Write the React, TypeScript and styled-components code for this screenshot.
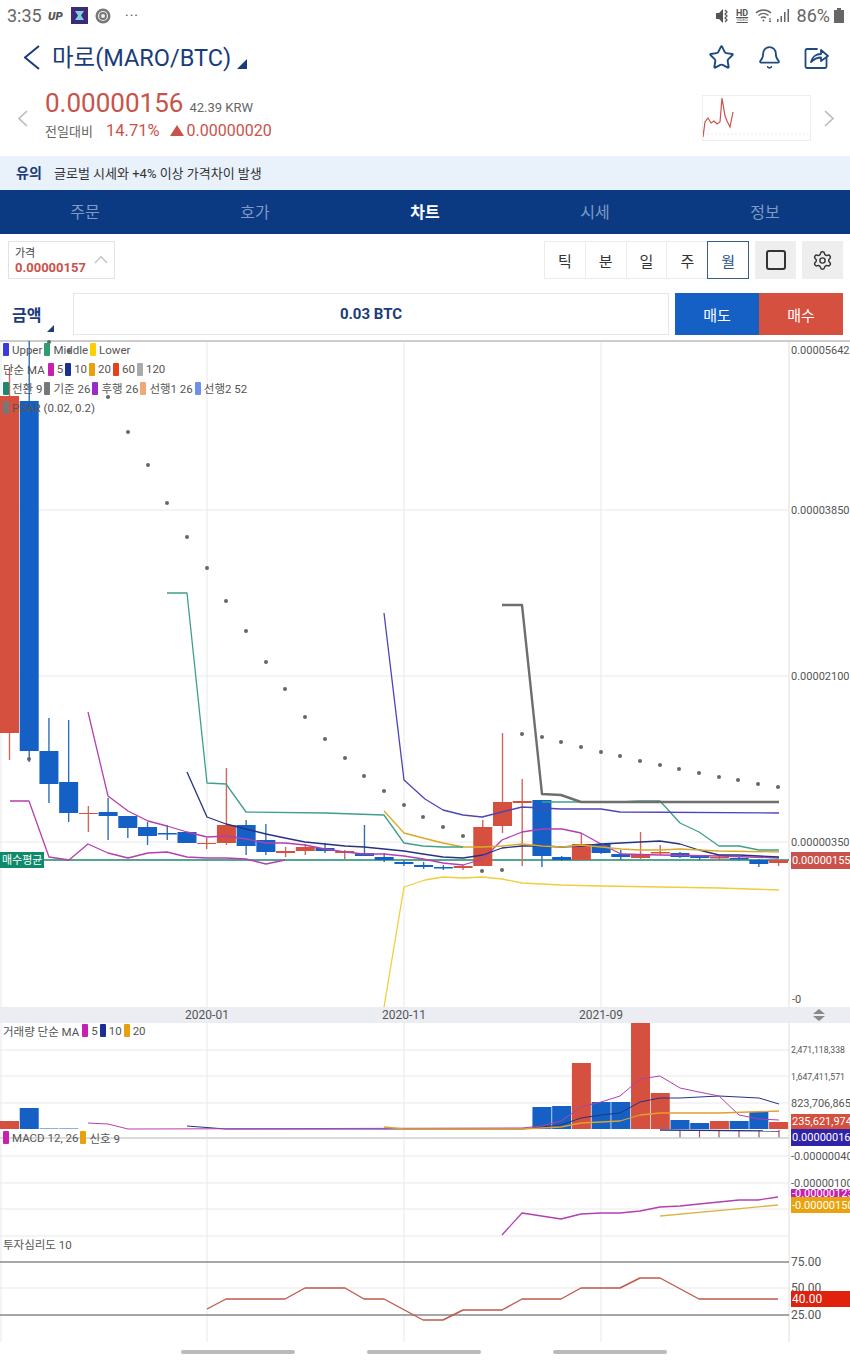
import React from 'react';
import styled, {createGlobalStyle} from 'styled-components';
import {Bell, Settings, Star} from 'lucide-react';

const FONT = `Roboto, "Noto Sans CJK KR", "Liberation Sans", sans-serif`;
const NAVY = '#1a3c7a';
const RED = '#d5503f';
const BLUE = '#1460c4';

const GlobalStyle = createGlobalStyle`
  html, body {
    margin: 0;
    padding: 0;
    background: #fff;
  }
  * {
    box-sizing: border-box;
  }
`;

const Page = styled.div`
  width: 850px;
  height: 1360px;
  overflow: hidden;
  background: #fff;
  font-family: ${FONT};
  color: #333;
`;

/* ---------- status bar ---------- */
const StatusBar = styled.div`
  height: 30px;
  padding: 1px 6px 0 7px;
  display: flex;
  align-items: center;
  justify-content: space-between;
  color: #666;
`;
const StatusGroup = styled.div`
  display: flex;
  align-items: center;
`;
const Time = styled.span`
  font-size: 18px;
  width: 41px;
`;
const UpMark = styled.span`
  font-size: 11.5px;
  font-weight: 900;
  font-style: italic;
  color: #555;
  width: 23px;
`;
const Dots = styled.span`
  margin-left: 14px;
  font-size: 14px;
  letter-spacing: 1px;
  color: #555;
`;
const HdMark = styled.span`
  margin: 0 5px 0 5px;
  width: 15px;
  display: flex;
  flex-direction: column;
  align-items: center;
  font-size: 9px;
  font-weight: 700;
  line-height: 9px;
  color: #555;
  text-decoration: underline;
  &::after {
    content: 'VIDEO';
    font-size: 4px;
    line-height: 4px;
    font-weight: 400;
  }
`;
const Battery = styled.span`
  font-size: 18px;
  margin: 0 4px 0 6px;
`;

/* ---------- title ---------- */
const TitleRow = styled.div`
  height: 55px;
  padding: 0 21px 0 24px;
  display: flex;
  align-items: center;
  color: ${NAVY};
`;
const Title = styled.h1`
  margin: 0 0 0 12px;
  font-size: 23.5px;
  font-weight: 400;
  line-height: 30px;
  color: ${NAVY};
`;
const CornerMark = styled.i<{$size: number}>`
  display: block;
  width: 0;
  height: 0;
  border-left: ${p => p.$size}px solid transparent;
  border-bottom: ${p => p.$size}px solid ${NAVY};
`;
const TitleMark = styled(CornerMark)`
  margin: 13px 0 0 6px;
`;
const TitleActions = styled.div`
  margin-left: auto;
  display: flex;
  align-items: center;
  gap: 22px;
  color: #1f4a80;
`;

/* ---------- price ---------- */
const PriceRow = styled.div`
  height: 71px;
  padding: 0 16px 5px 18px;
  display: flex;
  align-items: center;
  color: #bbb;
`;
const PriceBlock = styled.div`
  margin-left: 17px;
  display: flex;
  flex-direction: column;
  gap: 1px;
  padding-bottom: 7px;
`;
const PriceLine = styled.div`
  display: flex;
  align-items: baseline;
`;
const Price = styled.span`
  font-size: 26px;
  line-height: 32px;
  color: #c9534a;
`;
const Krw = styled.span`
  margin-left: 6px;
  font-size: 13px;
  color: #666;
`;
const CompareLabel = styled.span`
  font-size: 13px;
  color: #666;
  width: 61px;
`;
const Rate = styled.span`
  font-size: 16.500px;
  line-height: 22px;
  color: #c9534a;
`;
const ChangeValue = styled(Rate)`
  font-size: 16px;
`;
const UpArrow = styled.i`
  margin: 0 3px 0 10px;
  width: 0;
  height: 0;
  border-left: 7px solid transparent;
  border-right: 7px solid transparent;
  border-bottom: 11px solid #c9534a;
`;
const Spark = styled.div`
  margin-left: auto;
  width: 109px;
  height: 46px;
  border: 1px solid #eee;
`;
const NextChevron = styled.div`
  margin-left: 13px;
  display: flex;
`;

/* ---------- notice ---------- */
const Notice = styled.div`
  height: 34px;
  padding: 0 16px 2px;
  display: flex;
  align-items: center;
  background: #e9f1fb;
  font-size: 13px;
  color: #333;
`;
const NoticeTag = styled.b`
  width: 38px;
  font-size: 14px;
  color: ${NAVY};
`;

/* ---------- tabs ---------- */
const Tabs = styled.div`
  height: 44px;
  display: grid;
  grid-template-columns: repeat(5, 1fr);
  background: #0b3a82;
`;
const Tab = styled.div<{$active?: boolean}>`
  display: flex;
  align-items: center;
  justify-content: center;
  padding-bottom: 2px;
  font-size: 16px;
  font-weight: ${p => (p.$active ? 700 : 400)};
  color: ${p => (p.$active ? '#fff' : '#7f9bc4')};
`;

/* ---------- toolbar ---------- */
const Toolbar = styled.div`
  height: 51px;
  padding: 7px 7px 6px 8px;
  display: flex;
  align-items: stretch;
`;
const PriceBox = styled.div`
  width: 107px;
  padding: 5px 6px 0 6px;
  border: 1px solid #e2e2e2;
  position: relative;
  line-height: 14px;
`;
const PriceBoxLabel = styled.div`
  font-size: 11px;
  color: #444;
`;
const PriceBoxValue = styled.div`
  font-size: 13px;
  font-weight: 700;
  color: #c9534a;
`;
const PriceBoxChevron = styled.svg`
  position: absolute;
  right: 6px;
  top: 13px;
`;
const Segments = styled.div`
  margin-left: auto;
  display: flex;
`;
const Segment = styled.div<{$active?: boolean}>`
  width: 41.800px;
  display: flex;
  align-items: center;
  justify-content: center;
  font-size: 15px;
  border: 1px solid ${p => (p.$active ? '#3a5c8c' : '#ececec')};
  margin-left: -1px;
  position: relative;
  color: ${p => (p.$active ? '#274f8a' : '#333')};
`;
const SquareButton = styled.div`
  width: 41px;
  margin-left: 6px;
  display: flex;
  align-items: center;
  justify-content: center;
  background: #eee;
  color: #333;
`;
const SquareGlyph = styled.i`
  display: block;
  width: 20px;
  height: 20px;
  border: 2px solid #333;
  border-radius: 3px;
`;

/* ---------- order row ---------- */
const OrderRow = styled.div`
  height: 55px;
  padding: 8px 7px 5px 12px;
  display: flex;
`;
const AmountLabel = styled.div`
  width: 61px;
  position: relative;
  display: flex;
  align-items: center;
  font-size: 16px;
  font-weight: 700;
  color: ${NAVY};
`;
const AmountMark = styled(CornerMark)`
  position: absolute;
  left: 35px;
  bottom: 3px;
`;
const AmountInput = styled.div`
  width: 596px;
  display: flex;
  align-items: center;
  justify-content: center;
  border: 1px solid #e6e6e6;
  font-size: 15px;
  font-weight: 700;
  color: ${NAVY};
`;
const TradeButton = styled.div<{$bg: string}>`
  width: 84px;
  display: flex;
  align-items: center;
  justify-content: center;
  background: ${p => p.$bg};
  color: #fff;
  font-size: 15px;
`;
const SellButton = styled(TradeButton)`
  margin-left: 6px;
`;

/* ---------- chart ---------- */
const Chart = styled.div`
  border-top: 2px solid #ccc;
`;
const Pane = styled.div<{$h: number}>`
  position: relative;
  height: ${p => p.$h}px;
`;
const PaneSvg = styled.svg`
  display: block;
  overflow: visible;
  font-family: ${FONT};
`;
const Legend = styled.div<{$top?: number}>`
  position: absolute;
  left: 3px;
  top: ${p => p.$top ?? -2}px;
  display: flex;
  flex-direction: column;
`;
const LegendRow = styled.div`
  height: 19.400px;
  display: flex;
  align-items: center;
  font-size: 11.500px;
  color: #555;
  white-space: nowrap;
`;
const PaneLabel = styled.div`
  margin-right: 3px;
`;
const LegendItem = styled.div`
  display: flex;
  align-items: center;
  margin-right: 2px;
`;
const Swatch = styled.i<{$c: string}>`
  width: 6px;
  height: 13px;
  margin-right: 3px;
  background: ${p => p.$c};
  border-radius: 1px;
`;
const TimeStrip = styled.div`
  height: 16px;
  position: relative;
  background: #ebedf2;
  font-size: 12px;
  color: #555;
`;
const TimeLabel = styled.span<{$x: number}>`
  position: absolute;
  left: ${p => p.$x}px;
  top: 0;
  line-height: 16px;
  transform: translateX(-50%);
`;
const ResizeHandle = styled.svg`
  position: absolute;
  left: 813px;
  top: 2px;
`;
const AxisText = styled.text<{$size?: number; $c?: string}>`
  font-size: ${p => p.$size || 11}px;
  fill: ${p => p.$c || '#555'};
  dominant-baseline: central;
`;

const NavBar = styled.div`
  height: 18px;
  padding: 0 2px 0 0;
  display: flex;
  align-items: center;
  justify-content: center;
  gap: 72px;
`;
const NavPill = styled.i`
  width: 114px;
  height: 4px;
  margin-top: 1px;
  background: #bbb;
  border-radius: 2px;
`;

/* ---------- chart data, x by candle index, y in page pixels ---------- */
const cx = (i: number) => 9.5 + 19.72 * i;
const GRID_X = [1, 207, 404, 601, 789];

// index, up?, body top, body bottom, wick top, wick bottom
const candles: [number, boolean, number, number, number, number][] = [
  [0, true, 396, 733, 367, 760],
  [1, false, 401, 751, 341, 762],
  [2, false, 751, 784, 718, 803],
  [3, false, 782, 813, 720, 822],
  [4, true, 813, 814, 806, 832],
  [5, false, 812, 816, 798, 840],
  [6, false, 816, 828, 816, 838],
  [7, false, 827, 836, 822, 845],
  [8, false, 833, 834.5, 825, 840],
  [9, false, 832, 843, 832, 843],
  [10, true, 843, 844, 838, 849],
  [11, true, 825, 843, 768, 845],
  [12, false, 825, 846, 820, 855],
  [13, false, 840, 852, 824, 855],
  [14, true, 851, 853, 847, 857],
  [15, true, 847, 851, 844, 855],
  [16, false, 848, 851, 843, 853],
  [17, true, 851, 853, 850, 859],
  [18, false, 853, 856, 825, 856],
  [19, false, 857, 860, 853, 862],
  [20, false, 862, 864, 860, 866],
  [21, false, 865, 867, 862, 869],
  [22, false, 867, 868.5, 865, 870],
  [23, true, 866, 868, 865, 870],
  [24, true, 827, 866, 820, 866],
  [25, true, 802, 826, 733, 833],
  [26, true, 801, 803, 779, 866],
  [27, false, 800, 856, 800, 867],
  [28, false, 857, 860, 856, 861],
  [29, true, 844, 860, 833, 860],
  [30, false, 844, 853, 844, 854],
  [31, false, 854, 857, 850, 860],
  [32, true, 854, 858, 832, 859],
  [33, true, 852, 853.5, 845, 855],
  [34, false, 853, 857, 852, 858],
  [35, false, 856, 858, 855, 860],
  [36, true, 857, 858.5, 856, 860],
  [37, false, 858, 859.5, 857, 860],
  [38, false, 860, 864, 859, 867],
  [39, true, 860, 863, 860, 866],
];

const sar = [
  [49, 342], [69, 351], [108, 397], [128, 432], [148, 465], [167, 503], [187, 537], [207, 568], [226, 601],
  [246, 631], [266, 662], [285, 689], [305, 717], [325, 739], [345, 758], [364, 776], [384, 791], [404, 805],
  [423, 817], [443, 827], [463, 836], [482, 871], [502, 870], [522, 734], [542, 737], [561, 742], [581, 747],
  [601, 752], [620, 756], [640, 761], [660, 765], [679, 769], [699, 773], [719, 777], [738, 780], [758, 784],
  [778, 787], [29, 759],
];

type Series = {c: string; w?: number; p: number[][]};

const mainLines: Series[] = [
  {c: '#b33fb0', p: [[10, 801], [29, 801], [49, 857], [69, 860], [88, 844], [108, 853], [128, 858], [148, 853], [167, 852], [187, 857], [207, 858], [226, 858], [246, 859], [266, 864], [285, 860]]},
  {c: '#b33fb0', p: [[88, 712], [108, 796], [128, 811], [148, 821], [167, 826], [187, 832], [207, 837], [226, 836], [246, 839], [266, 843], [285, 843], [305, 845], [325, 849], [345, 852], [364, 854], [384, 854], [404, 856], [423, 859], [443, 863], [463, 865], [483, 859], [502, 840], [522, 832], [542, 829], [562, 829], [581, 833], [601, 844], [621, 854], [660, 855], [719, 856], [779, 858]]},
  {c: '#26337f', p: [[187, 772], [207, 817], [226, 824], [246, 829], [266, 834], [285, 838], [305, 842], [325, 844], [345, 846], [364, 847], [384, 849], [404, 851], [423, 854], [443, 857], [463, 858], [483, 855], [502, 848], [522, 846], [542, 846], [562, 847], [581, 846], [601, 844], [621, 843], [640, 842], [660, 841], [680, 844], [699, 850], [719, 855], [739, 855], [779, 857]]},
  {c: '#d9a928', p: [[384, 811], [404, 833], [423, 838], [443, 843], [463, 847], [483, 847], [502, 846], [522, 844], [542, 846], [562, 847], [581, 845], [601, 847], [621, 849], [640, 850], [660, 850], [680, 849], [719, 851], [779, 852]]},
  {c: '#3f9f8c', p: [[167, 593], [187, 593], [207, 783], [226, 784], [246, 812], [325, 813], [384, 815], [404, 843], [423, 846], [443, 847], [463, 847]]},
  {c: '#3f9f8c', p: [[542, 802], [620, 802], [640, 801], [660, 801], [680, 823], [699, 832], [719, 846], [739, 846], [759, 850], [779, 850]]},
  {c: '#4c46b8', p: [[384, 613], [404, 780], [425, 799], [443, 810], [463, 815], [482, 817], [502, 812], [522, 807], [542, 808], [561, 809], [601, 809], [620, 812], [779, 813]]},
  {c: '#f0cd3a', p: [[384, 1007], [404, 887], [425, 880], [443, 877], [463, 878], [482, 877], [502, 879], [522, 883], [542, 884], [561, 885], [601, 886], [660, 887], [719, 888], [779, 890]]},
  {c: '#6e6e6e', w: 2.4, p: [[502, 605], [522, 605], [542, 794], [561, 795], [581, 802], [779, 802]]},
];

const volumeBars: [number, boolean, number][] = [
  [0, true, 1121], [1, false, 1108], [2, false, 1128.5], [3, false, 1128.5], [27, false, 1107], [28, false, 1106],
  [29, true, 1063], [30, false, 1102], [31, false, 1102], [32, true, 1023], [33, true, 1093], [34, false, 1120],
  [35, false, 1123], [36, true, 1121], [37, false, 1121], [38, false, 1112], [39, true, 1122],
];

const volumeLines: Series[] = [
  {c: '#26337f', w: 1, p: [[187, 1126], [226, 1129], [522, 1129], [542, 1127], [561, 1125], [581, 1118], [601, 1115], [620, 1113], [640, 1102], [660, 1098], [680, 1098], [719, 1096], [759, 1098], [779, 1104]]},
  {c: '#26337f', p: [[660, 1130], [779, 1131]]},
  {c: '#b33fb0', w: 1, p: [[88, 1123], [108, 1124], [128, 1129], [522, 1128], [532, 1127], [542, 1126], [561, 1121], [581, 1107], [601, 1102], [620, 1096], [640, 1079], [660, 1076], [680, 1088], [699, 1092], [719, 1096], [739, 1115], [759, 1119], [779, 1120]]},
  {c: '#e0a030', p: [[384, 1127], [404, 1129], [522, 1129], [561, 1127], [581, 1123], [601, 1122], [620, 1121], [640, 1115], [660, 1113], [719, 1113], [779, 1111]]},
];

const macdLines: Series[] = [
  {c: '#b33fb0', p: [[502, 1235], [522, 1213], [561, 1219], [581, 1214], [601, 1213], [620, 1213], [640, 1211], [660, 1207], [680, 1206], [699, 1204], [719, 1202], [739, 1200], [758, 1200], [778, 1197]]},
  {c: '#dcb54a', p: [[660, 1216], [778, 1205]]},
];

const sentimentLine: Series = {
  c: '#c0584a',
  w: 1.4,
  p: [[207, 1309], [226, 1299], [285, 1299], [305, 1288], [345, 1288], [364, 1299], [384, 1299], [423, 1320], [443, 1320], [463, 1310], [502, 1310], [522, 1299], [561, 1299], [581, 1288], [620, 1288], [640, 1278], [660, 1278], [699, 1299], [778, 1299]],
};

const Lines: React.FC<{data: Series[]}> = ({data}) => (
  <>
    {data.map((s, i) => (
      <polyline key={i} points={s.p.map(q => q.join(',')).join(' ')} fill="none" stroke={s.c} strokeWidth={s.w || 1.3} strokeLinejoin="round" />
    ))}
  </>
);

const Grid: React.FC<{top: number; bottom: number; rows: number[]}> = ({top, bottom, rows}) => (
  <>
    {GRID_X.map(x => (
      <line key={x} x1={x} x2={x} y1={top} y2={bottom} stroke={x === 789 ? '#dedede' : '#e9e9e9'} />
    ))}
    {rows.map(y => (
      <line key={y} x1={0} x2={789} y1={y} y2={y} stroke="#e9e9e9" />
    ))}
  </>
);

const AxisBadge: React.FC<{y: number; h: number; bg: string; label: string; size?: number}> = ({y, h, bg, label, size}) => (
  <>
    <rect x={791} y={y} width={59} height={h} fill={bg} />
    <AxisText x={792} y={y + h / 2} $c="#fff" $size={size}>{label}</AxisText>
  </>
);

const ChevronIcon: React.FC<{dir: 'left' | 'right'; w: number; h: number; sw: number}> = ({dir, w, h, sw}) => (
  <svg width={w} height={h} viewBox={`0 0 ${w} ${h}`} fill="none" stroke="currentColor" strokeWidth={sw}>
    <polyline points={dir === 'left' ? `${w - 1},1 1,${h / 2} ${w - 1},${h - 1}` : `1,1 ${w - 1},${h / 2} 1,${h - 1}`} />
  </svg>
);

const legendRows: {label?: string; items: [string, string][]}[] = [
  {items: [['#3a3ae0', 'Upper'], ['#2f9e6e', 'Middle'], ['#ffd000', 'Lower']]},
  {label: '단순 MA', items: [['#c81fb0', '5'], ['#1a2f96', '10'], ['#e8a00c', '20'], ['#e8401c', '60'], ['#aaaaaa', '120']]},
  {items: [['#178a70', '전환 9'], ['#777777', '기준 26'], ['#9a2bc8', '후행 26'], ['#f0a878', '선행1 26'], ['#6e90e8', '선행2 52']]},
  {items: [['#777777', 'PSAR (0.02, 0.2)']]},
];

const tabs = ['주문', '호가', '차트', '시세', '정보'];
const periods = ['틱', '분', '일', '주', '월'];

const App: React.FC = () => {
  return (
    <Page>
      <GlobalStyle />
      <StatusBar>
        <StatusGroup>
          <Time>3:35</Time>
          <UpMark>UP</UpMark>
          <svg width="24" height="18" viewBox="0 0 24 18">
            <rect x="0" y="0" width="17" height="17" fill="#3d2a78" />
            <path d="M4 4h9l-3 4.5 3 4.5H4l3-4.5z" fill="#7fd0e0" />
          </svg>
          <svg width="16" height="16" viewBox="0 0 16 16">
            <circle cx="8" cy="8" r="7.5" fill="#777" />
            <circle cx="8" cy="8" r="4.5" fill="none" stroke="#eee" strokeWidth="1.2" />
            <circle cx="8" cy="8" r="2" fill="#eee" />
          </svg>
          <Dots>···</Dots>
        </StatusGroup>
        <StatusGroup>
          <svg width="15" height="16" viewBox="0 0 15 16">
            <path d="M1 5h3l4-4v14l-4-4H1z" fill="#555" />
            <path d="M10 2l2 2-2 2 2 2-2 2 2 2-2 2" fill="none" stroke="#555" strokeWidth="1.2" />
          </svg>
          <HdMark>HD</HdMark>
          <svg width="18" height="15" viewBox="0 0 18 15" fill="none" stroke="#666" strokeWidth="1.3">
            <path d="M1 5c4-4 11-4 15 0M3.5 7.5c3-2.5 7-2.500 10 0M6 10c1.600-1.300 3.400-1.300 5 0" />
            <circle cx="8.5" cy="12.5" r="1" fill="#666" stroke="none" />
            <path d="M15 10v4M14 13l1 1 1-1" strokeWidth="1" />
          </svg>
          <svg width="18" height="15" viewBox="0 0 18 15" fill="#666">
            <rect x="4" y="11" width="1.5" height="3" />
            <rect x="7.5" y="8" width="1.5" height="6" />
            <rect x="11" y="4" width="1.5" height="10" />
            <rect x="14.5" y="1" width="1.5" height="13" />
          </svg>
          <Battery>86%</Battery>
          <svg width="10" height="15" viewBox="0 0 10 15">
            <rect x="3" y="0" width="4" height="2" fill="#666" />
            <rect x="0" y="2" width="10" height="13" fill="#666" />
          </svg>
        </StatusGroup>
      </StatusBar>

      <TitleRow>
        <ChevronIcon dir="left" w={16} h={25} sw={2} />
        <Title>마로(MARO/BTC)</Title>
        <TitleMark $size={10} />
        <TitleActions>
          <Star size={27} strokeWidth={1.7} />
          <Bell size={25} strokeWidth={1.7} />
          <svg width="25" height="25" viewBox="0 0 25 25" fill="none" stroke="currentColor" strokeWidth="1.8" strokeLinejoin="round" strokeLinecap="round">
            <path d="M13 4H3a1.5 1.5 0 0 0-1.5 1.5v16A1.5 1.5 0 0 0 3 23h18a1.5 1.5 0 0 0 1.5-1.5V13" />
            <path d="M7 17c1-5 5-8 10-8V5l7 6-7 5v-3.5c-4 0-7 1.500-10 4.500z" />
          </svg>
        </TitleActions>
      </TitleRow>

      <PriceRow>
        <ChevronIcon dir="left" w={10} h={17} sw={1.6} />
        <PriceBlock>
          <PriceLine>
            <Price>0.00000156</Price>
            <Krw>42.39 KRW</Krw>
          </PriceLine>
          <PriceLine>
            <CompareLabel>전일대비</CompareLabel>
            <Rate>14.71%</Rate>
            <UpArrow />
            <ChangeValue>0.00000020</ChangeValue>
          </PriceLine>
        </PriceBlock>
        <Spark>
          <svg width="107" height="44" viewBox="703 96 107 44" fill="none">
            <polyline stroke="#ececec" strokeDasharray="2 2" points="703,134 810,134" />
            <polyline stroke="#c9534a" strokeWidth="1.2" points="703,137 705,122 708,118 711,123 714,121 717,124 720,122 722,98 725,116 727,121 730,127 733,112" />
          </svg>
        </Spark>
        <NextChevron>
          <ChevronIcon dir="right" w={10} h={17} sw={1.6} />
        </NextChevron>
      </PriceRow>

      <Notice>
        <NoticeTag>유의</NoticeTag>
        글로벌 시세와 +4% 이상 가격차이 발생
      </Notice>

      <Tabs>
        {tabs.map(t => (
          <Tab key={t} $active={t === '차트'}>{t}</Tab>
        ))}
      </Tabs>

      <Toolbar>
        <PriceBox>
          <PriceBoxLabel>가격</PriceBoxLabel>
          <PriceBoxValue>0.00000157</PriceBoxValue>
          <PriceBoxChevron width="14" height="9" viewBox="0 0 14 9" fill="none" stroke="#c4c4c4" strokeWidth="1.3">
            <polyline points="1,8 7,1.5 13,8" />
          </PriceBoxChevron>
        </PriceBox>
        <Segments>
          {periods.map(p => (
            <Segment key={p} $active={p === '월'}>{p}</Segment>
          ))}
        </Segments>
        <SquareButton>
          <SquareGlyph />
        </SquareButton>
        <SquareButton>
          <Settings size={21} strokeWidth={1.6} />
        </SquareButton>
      </Toolbar>

      <OrderRow>
        <AmountLabel>
          금액
          <AmountMark $size={7} />
        </AmountLabel>
        <AmountInput>0.03 BTC</AmountInput>
        <SellButton $bg={BLUE}>매도</SellButton>
        <TradeButton $bg={RED}>매수</TradeButton>
      </OrderRow>

      <Chart>
        <Pane $h={665}>
          <PaneSvg width="850" height="665" viewBox="0 342 850 665">
            <Grid top={342} bottom={1007} rows={[510, 676, 842]} />
            <line x1={0} x2={789} y1={860} y2={860} stroke="#1a8a6f" strokeWidth="1.3" />
            {candles.map(([i, up, top, bot, wt, wb]) => (
              <g key={i}>
                <line x1={cx(i)} x2={cx(i)} y1={wt} y2={wb} stroke={up ? '#d0685a' : '#2f6fb5'} strokeWidth="1.4" />
                <rect x={cx(i) - 9.5} y={top} width={19} height={bot - top} fill={up ? RED : BLUE} />
              </g>
            ))}
            <Lines data={mainLines} />
            {sar.map(([x, y]) => (
              <circle key={x} cx={x} cy={y} r="2" fill="#666" />
            ))}
            <AxisText x={791} y={350}>0.00005642</AxisText>
            <AxisText x={791} y={510}>0.00003850</AxisText>
            <AxisText x={791} y={676}>0.00002100</AxisText>
            <AxisText x={791} y={842}>0.00000350</AxisText>
            <AxisText x={792} y={999}>-0</AxisText>
            <AxisBadge y={852} h={17} bg="#c9534a" label="0.00000155" />
            <rect x={0} y={852} width={44} height={16} fill="#108a6a" />
            <AxisText x={2} y={860} $c="#fff" $size={11}>매수평균</AxisText>
          </PaneSvg>
          <Legend>
            {legendRows.map((row, i) => (
              <LegendRow key={i}>
                {row.label && <PaneLabel>{row.label}</PaneLabel>}
                {row.items.map(([c, t]) => (
                  <LegendItem key={t}>
                    <Swatch $c={c} />
                    {t}
                  </LegendItem>
                ))}
              </LegendRow>
            ))}
          </Legend>
        </Pane>

        <TimeStrip>
          <TimeLabel $x={207}>2020-01</TimeLabel>
          <TimeLabel $x={404}>2020-11</TimeLabel>
          <TimeLabel $x={601}>2021-09</TimeLabel>
          <ResizeHandle width="12" height="12" viewBox="0 0 12 12" fill="#888">
            <path d="M6 0l6 5H0z" />
            <path d="M6 12l6-5H0z" />
          </ResizeHandle>
        </TimeStrip>

        <Pane $h={115}>
          <PaneSvg width="850" height="115" viewBox="0 1023 850 115">
            <Grid top={1023} bottom={1138} rows={[1050, 1076, 1103]} />
            {volumeBars.map(([i, up, top]) => (
              <rect key={i} x={cx(i) - 9.5} y={top} width={19} height={1129 - top} fill={up ? RED : BLUE} />
            ))}
            {[680, 699.5, 719, 739, 759, 779].map(x => (
              <line key={x} x1={x} x2={x} y1={1130} y2={1138} stroke="#b0505a" strokeWidth="1.2" />
            ))}
            <Lines data={volumeLines} />
            <line x1={0} x2={789} y1={1138} y2={1138} stroke="#cfcfcf" strokeWidth="1.5" />
            <AxisText x={791} y={1050} $size={8.7}>2,471,118,338</AxisText>
            <AxisText x={791} y={1077} $size={8.7}>1,647,411,571</AxisText>
            <AxisText x={791} y={1103}>823,706,865</AxisText>
            <AxisBadge y={1114} h={15} bg="#d5503f" label="235,621,974" />
            <AxisBadge y={1129} h={17} bg="#3023a8" label="0.00000016" />
          </PaneSvg>
          <Legend $top={-2}>
            <LegendRow>
              <PaneLabel>거래량 단순 MA</PaneLabel>
              <LegendItem><Swatch $c="#c81fb0" />5</LegendItem>
              <LegendItem><Swatch $c="#1a2f96" />10</LegendItem>
              <LegendItem><Swatch $c="#e8a00c" />20</LegendItem>
            </LegendRow>
          </Legend>
        </Pane>

        <Pane $h={98}>
          <PaneSvg width="850" height="98" viewBox="0 1138 850 98">
            <Grid top={1138} bottom={1236} rows={[1156, 1183, 1209, 1236]} />
            <Lines data={macdLines} />
            <AxisText x={791} y={1156}>-0.00000040</AxisText>
            <AxisText x={791} y={1183}>-0.00000100</AxisText>
            <AxisBadge y={1189} h={9} bg="#c51fb2" label="-0.00000123" />
            <AxisBadge y={1197} h={16} bg="#e8a30f" label="-0.00000150" />
          </PaneSvg>
          <Legend $top={-10}>
            <LegendRow>
              <LegendItem><Swatch $c="#c81fb0" />MACD 12, 26</LegendItem>
              <LegendItem><Swatch $c="#e8a00c" />신호 9</LegendItem>
            </LegendRow>
          </Legend>
        </Pane>

        <Pane $h={106}>
          <PaneSvg width="850" height="106" viewBox="0 1236 850 106">
            <Grid top={1236} bottom={1342} rows={[1288]} />
            <line x1={0} x2={789} y1={1262} y2={1262} stroke="#888" strokeWidth="1.6" />
            <line x1={0} x2={789} y1={1315} y2={1315} stroke="#888" strokeWidth="1.6" />
            <Lines data={[sentimentLine]} />
            <AxisText x={791} y={1262} $size={12}>75.00</AxisText>
            <AxisText x={791} y={1288} $size={12}>50.00</AxisText>
            <AxisText x={791} y={1315} $size={12}>25.00</AxisText>
            <AxisBadge y={1291} h={16} bg="#e0210e" label="40.00" size={12} />
          </PaneSvg>
          <Legend $top={-2}>
            <LegendRow>투자심리도 10</LegendRow>
          </Legend>
        </Pane>
      </Chart>

      <NavBar>
        <NavPill />
        <NavPill />
        <NavPill />
      </NavBar>
    </Page>
  );
};

export default App;
